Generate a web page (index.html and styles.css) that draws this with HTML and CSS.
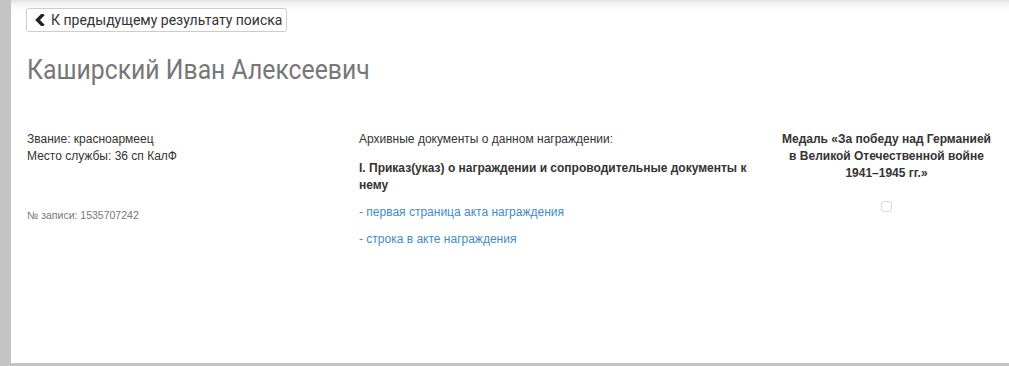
FILE: index.html
```html
<!DOCTYPE html>
<html lang="ru">
<head>
<meta charset="utf-8">
<title>Каширский Иван Алексеевич</title>
<link rel="stylesheet" href="styles.css">
</head>
<body>
<div class="page">
  <a class="back-btn" href="#">
    <svg class="chev" width="10" height="12" viewBox="0 0 10 12"><path d="M7.2 1.3 L2.6 6 L7.2 10.7" fill="none" stroke="#222" stroke-width="3.4" stroke-linecap="square" stroke-linejoin="miter"/></svg>
    <span>К предыдущему результату поиска</span>
  </a>
  <h1 class="title"><span class="title-text">Каширский Иван Алексеевич</span></h1>
  <div class="row">
    <div class="col col-info">
      <p class="line">Звание: красноармеец</p>
      <p class="line">Место службы: 36 сп КалФ</p>
      <p class="record">№ записи: 1535707242</p>
    </div>
    <div class="col col-docs">
      <p class="line">Архивные документы о данном награждении:</p>
      <p class="doc-head">I. Приказ(указ) о награждении и сопроводительные документы к нему</p>
      <p class="doc-link"><a href="#">- первая страница акта награждения</a></p>
      <p class="doc-link"><a href="#">- строка в акте награждения</a></p>
    </div>
    <div class="col col-medal">
      <p class="medal-name">Медаль «За победу над Германией в Великой Отечественной войне 1941–1945 гг.»</p>
      <div class="medal-img"><span class="box"></span></div>
    </div>
  </div>
</div>
</body>
</html>
```

FILE: styles.css
```css
html, body {
  margin: 0;
  padding: 0;
}
body {
  background: #c4c4c4;
  height: 366px;
  overflow: hidden;
  font-family: "Liberation Sans", Arial, sans-serif;
  font-size: 12px;
  color: #333;
}
.page {
  margin-left: 11px;
  height: 363px;
  box-sizing: border-box;
  padding: 8px 0 0 16px;
  background: linear-gradient(#e4e4e4 0px, #f6f6f6 5px, #ffffff 11px);
}
.back-btn {
  display: inline-flex;
  align-items: center;
  gap: 6px;
  height: 24px;
  box-sizing: border-box;
  margin-left: -1px;
  padding: 0 4px 0 8px;
  border: 1px solid #cccccc;
  border-radius: 3px;
  background: #fff;
  color: #333;
  text-decoration: none;
  font-family: Roboto, "Liberation Sans", sans-serif;
  font-size: 14px;
  line-height: 20px;
}
.chev {
  display: block;
}
.title {
  margin: 21px 0 0 0;
  font-family: Roboto, "Liberation Sans", sans-serif;
  font-weight: 400;
  font-size: 28px;
  line-height: 34px;
  color: #777;
}
.title-text {
  display: inline-block;
  transform: scaleX(0.885);
  transform-origin: left center;
}
.row {
  display: grid;
  grid-template-columns: 332px 402px 1fr;
  margin-top: 44px;
}
.col p {
  margin: 0;
}
.line {
  line-height: 17px;
}
.record {
  margin-top: 43px !important;
  font-size: 10.5px;
  line-height: 14px;
  color: #777;
}
.col-docs {
  padding-right: 14px;
}
.doc-head {
  margin-top: 12px !important;
  font-weight: bold;
  line-height: 17px;
}
.doc-link {
  margin-top: 10px !important;
  line-height: 17px;
}
.doc-link a {
  color: #428bca;
  text-decoration: none;
}
.col-medal {
  padding: 0 13px 0 16px;
  text-align: center;
}
.medal-name {
  font-weight: bold;
  line-height: 17px;
}
.medal-img {
  margin-top: 19px;
  display: flex;
  justify-content: center;
}
.box {
  display: block;
  width: 9px;
  height: 9px;
  border: 1px solid #d8d8d8;
  border-radius: 3px;
}
```
